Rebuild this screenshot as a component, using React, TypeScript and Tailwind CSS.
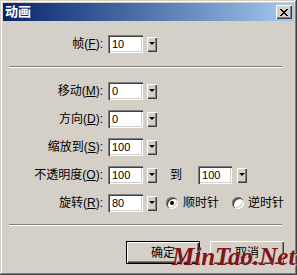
import React from "react";

const FONT = { fontFamily: '"Liberation Sans","Noto Sans CJK SC",sans-serif' };

function Field({ value, w = 35 }: { value: string; w?: number }) {
  return (
    <div
      className="h-[18px] bg-white flex items-center pl-[4px] text-[11px] text-black shadow-[inset_1px_1px_#808080,inset_2px_2px_#404040,inset_-1px_-1px_#ffffff,inset_-2px_-2px_#d4d0c8]"
      style={{ width: w }}
    >
      {value}
    </div>
  );
}

function Drop() {
  return (
    <div className="w-[10px] h-[15px] bg-[#d4d0c8] flex items-start justify-center pt-[5px] shadow-[inset_1px_1px_#ffffff,inset_-1px_-1px_#404040,inset_-2px_-2px_#808080]">
      <div className="w-0 h-0 border-l-[3px] border-r-[3px] border-t-[3px] border-l-transparent border-r-transparent border-t-black" />
    </div>
  );
}

function Label({ zh, key1 }: { zh: string; key1: string }) {
  return (
    <div className="w-[103px] text-right text-[12px] leading-[18px] text-black whitespace-nowrap">
      {zh}(<span className="underline underline-offset-[1px]">{key1}</span>):
    </div>
  );
}

function Radio({ checked }: { checked?: boolean }) {
  return (
    <div className="w-[12px] h-[12px] rounded-full bg-white flex items-center justify-center shadow-[inset_1px_1px_#808080,inset_2px_2px_#404040,inset_-1px_-1px_#ffffff,inset_-2px_-2px_#d4d0c8]">
      {checked && <div className="w-[4px] h-[4px] rounded-full bg-black" />}
    </div>
  );
}

function Sep() {
  return <div className="ml-[9px] w-[273px] h-[2px] border-t border-t-[#808080] border-b border-b-white" />;
}

export default function App() {
  return (
    <div
      className="relative w-[297px] h-[275px] bg-[#d4d0c8] overflow-hidden shadow-[inset_-1px_-1px_#404040,inset_1px_1px_#d4d0c8,inset_-2px_-2px_#808080,inset_2px_2px_#ffffff]"
      style={FONT}
    >
      {/* title bar */}
      <div className="mx-[3px] mt-[3px] h-[18px] flex items-center justify-between bg-gradient-to-r from-[#0a246a] to-[#a6caf0]">
        <span className="pl-[2px] text-white font-bold text-[13px] leading-[18px]">动画</span>
        <div className="mr-[2px] w-[16px] h-[14px] bg-[#d4d0c8] flex items-center justify-center shadow-[inset_1px_1px_#ffffff,inset_-1px_-1px_#404040,inset_-2px_-2px_#808080]">
          <svg width="8" height="7" viewBox="0 0 8 7" shapeRendering="crispEdges">
            <path d="M0 0h2v1h-2zM6 0h2v1h-2zM1 1h2v1h-2zM5 1h2v1h-2zM2 2h4v1h-4zM3 3h2v1h-2zM2 4h4v1h-4zM1 5h2v1h-2zM5 5h2v1h-2zM0 6h2v1h-2zM6 6h2v1h-2z" fill="#000" />
          </svg>
        </div>
      </div>

      {/* frame row */}
      <div className="mt-[14px] h-[18px] flex items-center">
        <Label zh="帧" key1="F" />
        <div className="ml-[5px]"><Field value="10" /></div>
        <div className="ml-[4px]"><Drop /></div>
      </div>

      <div className="mt-[13px]"><Sep /></div>

      <div className="mt-[14px] flex flex-col gap-[10px]">
        <div className="h-[18px] flex items-center">
          <Label zh="移动" key1="M" />
          <div className="ml-[5px]"><Field value="0" /></div>
          <div className="ml-[4px]"><Drop /></div>
        </div>
        <div className="h-[18px] flex items-center">
          <Label zh="方向" key1="D" />
          <div className="ml-[5px]"><Field value="0" /></div>
          <div className="ml-[4px]"><Drop /></div>
        </div>
        <div className="h-[18px] flex items-center">
          <Label zh="缩放到" key1="S" />
          <div className="ml-[5px]"><Field value="100" /></div>
          <div className="ml-[4px]"><Drop /></div>
        </div>
        <div className="h-[18px] flex items-center">
          <Label zh="不透明度" key1="O" />
          <div className="ml-[5px]"><Field value="100" /></div>
          <div className="ml-[4px]"><Drop /></div>
          <span className="ml-[13px] text-[12px] text-black">到</span>
          <div className="ml-[16px]"><Field value="100" w={34} /></div>
          <div className="ml-[5px]"><Drop /></div>
        </div>
        <div className="h-[18px] flex items-center">
          <Label zh="旋转" key1="R" />
          <div className="ml-[5px]"><Field value="80" /></div>
          <div className="ml-[4px]"><Drop /></div>
          <div className="ml-[9px]"><Radio checked /></div>
          <span className="ml-[5px] text-[12px] text-black">顺时针</span>
          <div className="ml-[13px]"><Radio /></div>
          <span className="ml-[4px] text-[12px] text-black">逆时针</span>
        </div>
      </div>

      <div className="mt-[12px]"><Sep /></div>

      <div className="mt-[15px] pl-[126px] flex gap-[10px]">
        <div className="w-[74px] h-[23px] border border-black bg-[#d4d0c8] flex items-center justify-center text-[12px] text-black shadow-[inset_1px_1px_#ffffff,inset_-1px_-1px_#404040,inset_-2px_-2px_#808080]">
          确定
        </div>
        <div className="w-[74px] h-[23px] bg-[#d4d0c8] flex items-center justify-center text-[12px] text-black shadow-[inset_1px_1px_#ffffff,inset_-1px_-1px_#404040,inset_-2px_-2px_#808080]">
          取消
        </div>
      </div>

      {/* watermark */}
      <div
        className="absolute left-[172px] top-[242px] text-[25px] leading-[30px] italic font-bold text-[#7d1717] [text-shadow:1px_1px_0_#e0c0c0] whitespace-nowrap"
        style={{ fontFamily: '"Liberation Serif",serif' }}
      >
        MinTao.Net
      </div>
    </div>
  );
}
